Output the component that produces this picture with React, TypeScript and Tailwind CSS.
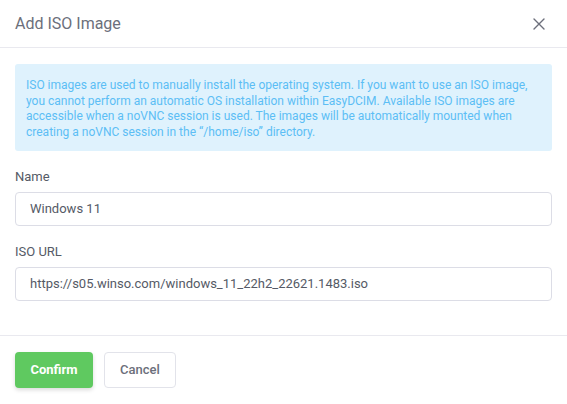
import React from "react";

export default function App() {
  return (
    <div
      className="w-[567px] h-[404px] bg-white flex flex-col"
      style={{ fontFamily: "Roboto, 'Liberation Sans', sans-serif" }}
    >
      <div className="h-[48px] flex items-center justify-between pl-[15px] pr-[22px] border-b border-[#e9e9ef]">
        <div className="text-[16px] text-[#6c6f7b] mt-[1px]">Add ISO Image</div>
        <svg width="12" height="12" viewBox="0 0 12 12" className="mt-[1px]">
          <path d="M1 1L11 11M11 1L1 11" stroke="#6c6f7b" strokeWidth="1.4" strokeLinecap="round" />
        </svg>
      </div>
      <div className="flex flex-col px-[15px] pt-[16px] h-[288px] border-b border-[#e9e9ef]">
        <div className="bg-[#dff2fd] rounded-[3px] px-[11px] pt-[14px] pb-[11px] text-[12px] leading-[15.5px] text-[#5cbef5]">
          ISO images are used to manually install the operating system. If you want to use an ISO image, you cannot perform an automatic OS installation within EasyDCIM. Available ISO images are accessible when a noVNC session is used. The images will be automatically mounted when creating a noVNC session in the “/home/iso” directory.
        </div>
        <div className="mt-[16px] text-[13px] leading-[20px] text-[#555a66]">Name</div>
        <div className="mt-[5px] h-[34px] border border-[#dcdde6] rounded-[4px] flex items-center pl-[14px] text-[13px] text-[#555a66]">
          Windows 11
        </div>
        <div className="mt-[16px] text-[13px] leading-[20px] text-[#555a66]">ISO URL</div>
        <div className="mt-[5px] h-[34px] border border-[#dcdde6] rounded-[4px] flex items-center pl-[14px] text-[13px] text-[#555a66]">
          https://s05.winso.com/windows_11_22h2_22621.1483.iso
        </div>
      </div>
      <div className="flex gap-[11px] px-[15px] pt-[16px]">
        <button className="w-[78px] h-[36px] rounded-[4px] bg-[#5fc960] text-white text-[13px] font-bold shadow-[0_2px_4px_rgba(0,0,0,0.15)]">
          Confirm
        </button>
        <button className="w-[72px] h-[36px] rounded-[4px] bg-white border border-[#e2e3ea] text-[#6c6f7b] text-[13px] font-medium">
          Cancel
        </button>
      </div>
    </div>
  );
}
